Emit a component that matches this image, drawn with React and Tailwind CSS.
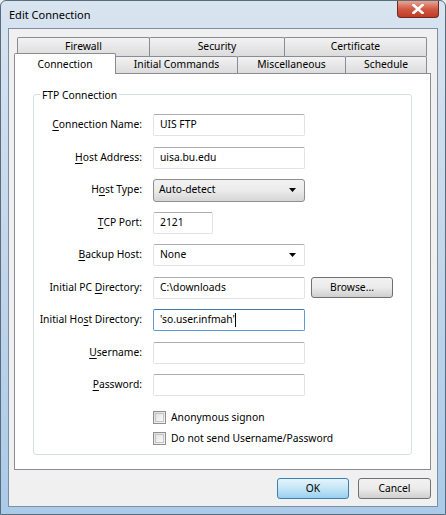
import React from 'react';

const font = { fontFamily: '"Noto Sans", "Open Sans", sans-serif' };

const U = ({ children }) => <span className="underline underline-offset-2">{children}</span>;

const TextBox = ({ value, width = 'w-[152px]', focused }) => (
  <div
    className={`${width} h-[22px] flex items-center px-[6px] bg-white rounded-[2px] border ${
      focused ? 'border-[#5b9bd5] border-t-[#3d7bad]' : 'border-[#e2e3ea] border-t-[#abadb3]'
    } text-black`}
  >
    <span>{value}</span>
    {focused && <span className="w-px h-[14px] bg-black" />}
  </div>
);

const Combo = ({ value }) => (
  <div className="w-[152px] h-[23px] flex items-center justify-between pl-[5px] pr-[8px] rounded-[3px] border border-[#8e8f8f] bg-gradient-to-b from-[#f2f2f2] via-[#ebebeb] to-[#d5d5d5]">
    <span>{value}</span>
    <svg width="7" height="4" viewBox="0 0 7 4"><path d="M0 0h7L3.5 4z" fill="#000" /></svg>
  </div>
);

const Combo2 = ({ value }) => (
  <div className="w-[152px] h-[22px] flex items-center justify-between pl-[6px] pr-[8px] rounded-[2px] border border-[#e2e3ea] border-t-[#abadb3] bg-white">
    <span>{value}</span>
    <svg width="7" height="4" viewBox="0 0 7 4"><path d="M0 0h7L3.5 4z" fill="#000" /></svg>
  </div>
);

const Row = ({ label, children }) => (
  <div className="flex items-center h-[22px]">
    <div className="w-[108px] text-right whitespace-nowrap">{label}</div>
    <div className="ml-[11px] flex items-center">{children}</div>
  </div>
);

const Check = ({ label }) => (
  <div className="flex items-center gap-[5px] h-[13px]">
    <div className="w-[13px] h-[13px] border border-[#8f8f8f] bg-gradient-to-br from-[#dcdcdc] to-[#f8f8f8] p-px">
      <div className="w-full h-full border border-[#c4c4c4] bg-gradient-to-br from-[#e2e2e2] to-[#fafafa]" />
    </div>
    <span>{label}</span>
  </div>
);

const Button = ({ children, primary, className = '' }) => (
  <div
    className={`flex items-center justify-center rounded-[3px] border ${
      primary
        ? 'border-[#3c7fb1] bg-gradient-to-b from-[#e5f4fc] via-[#c4e5f6] to-[#98d1ef]'
        : 'border-[#707070] bg-gradient-to-b from-[#f2f2f2] via-[#ebebeb] to-[#cfcfcf]'
    } ${className}`}
  >
    {children}
  </div>
);

const BackTab = ({ label, w, h = 'h-[19px]' }) => (
  <div className={`${w} ${h} -ml-px first:ml-0 flex items-center justify-center border border-b-0 border-[#898c95] rounded-t-[2px] bg-gradient-to-b from-[#f2f2f2] to-[#dcdcdc]`}>
    {label}
  </div>
);

export default function App() {
  return (
    <div style={font} className="w-[446px] h-[515px] bg-[#f0f0f0] text-black text-[10.3px]">
      <div className="w-[446px] h-[515px] flex flex-col rounded-t-[6px] border border-[#5a6b7c] bg-gradient-to-b from-[#d8e4f0] via-[#c3d6ea] to-[#a9cbe9] px-[7px] pb-[7px]">
        {/* title bar */}
        <div className="h-[27px] flex items-start justify-between">
          <div className="pt-[6px] pl-px text-[11px] text-black">Edit Connection</div>
          <div className="w-[42px] h-[17px] mr-[-1px] rounded-b-[4px] border border-t-0 border-[#6b2a22] bg-gradient-to-b from-[#e8a493] via-[#cf5a45] to-[#c23a22] flex items-center justify-center">
            <svg width="12" height="10" viewBox="0 0 12 10">
              <path d="M1.5 1 L10.5 9 M10.5 1 L1.5 9" stroke="#fff" strokeWidth="2.6" strokeLinecap="square" />
            </svg>
          </div>
        </div>

        {/* client area */}
        <div className="flex-1 flex flex-col border border-[#7f8fa1] bg-[#f0f0f0]">
          {/* tabs */}
          <div className="pt-[8px] pl-[8px] flex">
            <BackTab label="Firewall" w="w-[133px]" />
            <BackTab label="Security" w="w-[136px]" />
            <BackTab label="Certificate" w="w-[143px]" />
          </div>
          <div className="pl-[5px] flex items-end h-[17px] relative z-10">
            <div className="w-[102px] h-[21px] mb-[-1px] flex items-start pt-[3px] justify-center border border-b-0 border-[#898c95] rounded-t-[2px] bg-white">
              Connection
            </div>
            <BackTab label="Initial Commands" w="w-[123px]" h="h-[17px]" />
            <BackTab label="Miscellaneous" w="w-[109px]" h="h-[17px]" />
            <BackTab label="Schedule" w="w-[82px]" h="h-[17px]" />
          </div>
          <div className="ml-[5px] w-[417px] h-[397px] bg-white border border-[#898c95] pt-[20px] px-[18px]">
            {/* group box */}
            <div className="relative h-[361px] rounded-[3px] border border-[#d5dfe5] pt-[19px]">
              <div className="absolute -top-[8px] left-[6px] px-[2px] bg-white leading-[16px]">FTP Connection</div>
              <div className="flex flex-col gap-[10.5px]">
                <Row label={<><U>C</U>onnection Name:</>}>
                  <TextBox value="UIS FTP" />
                </Row>
                <Row label={<><U>H</U>ost Address:</>}>
                  <TextBox value="uisa.bu.edu" />
                </Row>
                <Row label={<>H<U>o</U>st Type:</>}>
                  <Combo value="Auto-detect" />
                </Row>
                <Row label={<><U>T</U>CP Port:</>}>
                  <TextBox value="2121" width="w-[60px]" />
                </Row>
                <Row label={<><U>B</U>ackup Host:</>}>
                  <Combo2 value="None" />
                </Row>
                <Row label={<>Initial PC <U>D</U>irectory:</>}>
                  <TextBox value="C:\downloads" />
                  <Button className="ml-[6px] w-[82px] h-[21px]">Browse...</Button>
                </Row>
                <Row label={<>Initial Ho<U>s</U>t Directory:</>}>
                  <TextBox value="'so.user.infmah'" focused />
                </Row>
                <Row label={<><U>U</U>sername:</>}>
                  <TextBox value="" />
                </Row>
                <Row label={<><U>P</U>assword:</>}>
                  <TextBox value="" />
                </Row>
              </div>
              <div className="ml-[119px] mt-[15px] flex flex-col gap-[8px]">
                <Check label="Anonymous signon" />
                <Check label="Do not send Username/Password" />
              </div>
            </div>
          </div>

          {/* buttons */}
          <div className="flex justify-end gap-[9px] pr-[6px] mt-[8px]">
            <Button primary className="w-[72px] h-[21px]">OK</Button>
            <Button className="w-[73px] h-[21px]">Cancel</Button>
          </div>
        </div>
      </div>
    </div>
  );
}
